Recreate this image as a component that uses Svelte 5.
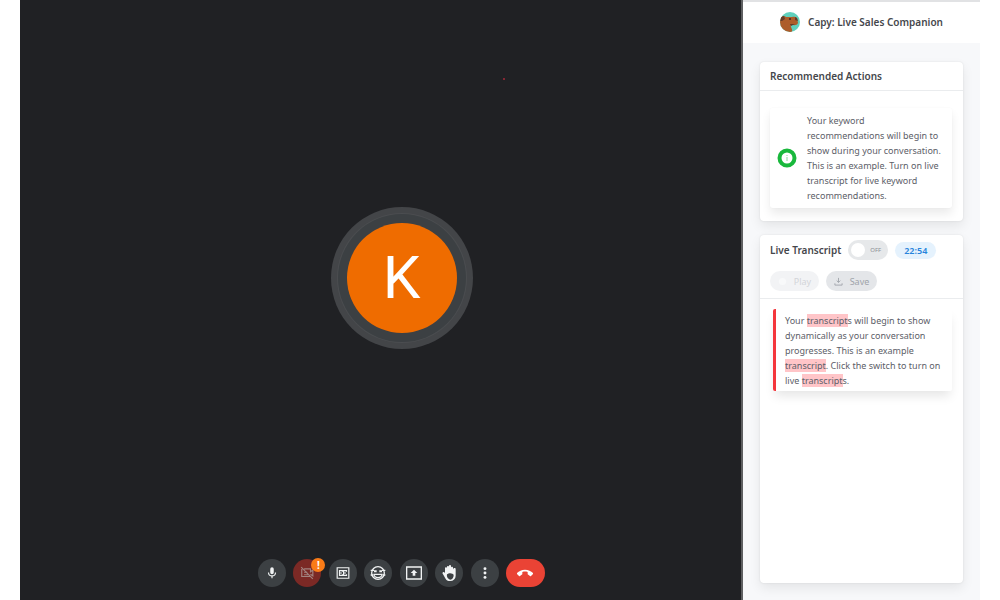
<script>
  let live = $state(false);
</script>

<div class="page">
  <main class="stage">
    <span class="dot"></span>
    <div class="tile">
      <div class="ring"><div class="halo"><div class="avatar">K</div></div></div>
    </div>
    <div class="bar">
      <div class="controls">
        <button class="round" aria-label="Microphone">
          <svg viewBox="0 0 24 24"><path d="M12 14a3 3 0 0 0 3-3V5a3 3 0 0 0-6 0v6a3 3 0 0 0 3 3zm5-3a5 5 0 0 1-10 0H5a7 7 0 0 0 6 6.9V21h2v-3.1a7 7 0 0 0 6-6.9z" /></svg>
        </button>
        <button class="round camera" aria-label="Camera off">
          <svg viewBox="0 0 24 24" class="line"><path d="M7 5H18V10L22 7V17L18 14M18 18H3V5M2 2L22 22M7 15h7M8 12a2 2 0 0 1 4 0" /></svg>
          <span class="badge">!</span>
        </button>
        <button class="round" aria-label="Captions">
          <svg viewBox="0 0 24 24" class="line"><path d="M2 3H22V21H2ZM11 10V8H6V16H11V14M18 10V8H13V16H18V14M6 12h4M13 12h4" /></svg>
        </button>
        <button class="round" aria-label="Reactions">
          <svg viewBox="0 0 24 24" class="line face"><circle cx="12" cy="12" r="9.500" /><path d="M1 8h5M18 8h5M1 15h4M19 15h4" /><path class="fill" d="M6 8h4v3H6zM14 8h4v3h-4z" /><path d="M6 14h12a6 5 0 0 1-12 0z" /></svg>
        </button>
        <button class="round" aria-label="Present">
          <svg viewBox="0 0 24 24" class="line present"><path d="M1 3H23V21H1Z" /><path class="fill" d="M12 7l5 5h-3v4h-4v-4H7z" /></svg>
        </button>
        <button class="round" aria-label="Raise hand">
          <svg viewBox="0 0 24 24" class="hand"><path d="M22 6v10a8 8 0 0 1-8 8c-4 0-6-1-8-5L2 12l1-1c1-1 2 0 3 1V5c0-2 3-2 3 0V3c0-2 3-2 3 0V2c0-3 3-3 3 0v2c0-2 3-2 3 0v3c0-3 4-3 4-1z" /><path class="palm" d="M9 14c3-3 9-2 10 1 0 4-2 7-5 7s-6-4-5-8z" /></svg>
        </button>
        <button class="round" aria-label="More options">
          <svg viewBox="0 0 24 24"><circle cx="12" cy="4.500" r="2.500" /><circle cx="12" cy="12" r="2.500" /><circle cx="12" cy="19.500" r="2.500" /></svg>
        </button>
        <button class="round end" aria-label="Leave call">
          <svg viewBox="0 0 24 24"><path d="M12 7C7 7 3 9 0 12c-.5.500-.5 1 0 1.500l3 3c.5.500 1 .4 1.500 0L8 14v-3.500c3-1 5-1 8 0V14l3.500 2.500c.5.400 1 .5 1.500 0l3-3c.5-.5.500-1 0-1.500-3-3-7-5-12-5z" /></svg>
        </button>
      </div>
    </div>
  </main>

  <aside class="panel">
    <header class="brand">
      <svg class="logo" viewBox="0 0 20 20" aria-hidden="true">
        <defs><clipPath id="disc"><circle cx="10" cy="10" r="10" /></clipPath></defs>
        <g clip-path="url(#disc)">
          <rect width="20" height="20" fill="#5fd0bd" />
          <path d="M0 7C1 4 4 3 6 5L9 5C12 5 15 4 17 6L18 11C17 14 14 13 11 13C10 15 13 17 12 20H0Z" fill="#ad5d2a" />
          <path d="M1 5L4 4L5 7L2 9L0 9ZM15 5L17 6L18 9L15 8ZM10 12L15 12L11 14Z" fill="#633b2a" />
          <circle cx="10" cy="7" r="1" fill="#3c2920" />
        </g>
      </svg>
      <h1>Capy: Live Sales Companion</h1>
    </header>

    <div class="cards">
      <section class="card">
        <h2 class="head">Recommended Actions</h2>
        <div class="tip">
          <svg class="info" viewBox="0 0 20 20" aria-hidden="true"><circle cx="10" cy="10" r="7.500" /><path d="M10 7v1M10 9v4" /></svg>
          <p>Your keyword recommendations will begin to show during your conversation. This is an example. Turn on live transcript for live keyword recommendations.</p>
        </div>
      </section>

      <section class="card grow">
        <div class="head tools">
          <div class="row">
            <h2>Live Transcript</h2>
            <label class="switch">
              <input type="checkbox" role="switch" aria-label="Live Transcript" bind:checked={live} />
              <span class="knob"></span><span>{live ? 'ON' : 'OFF'}</span>
            </label>
            <span class="time">22:54</span>
          </div>
          <div class="row actions">
            <button class="pill play" disabled><svg viewBox="0 0 10 10"><circle cx="5" cy="5" r="4" /></svg>Play</button>
            <button class="pill" disabled><svg viewBox="0 0 10 10"><path d="M5 1V6M3 4L5 6L7 4M1 7V9H9V7" /></svg>Save</button>
          </div>
        </div>
        <p class="quote">Your <mark>transcript</mark>s will begin to show dynamically as your conversation progresses. This is an example <mark>transcript</mark>. Click the switch to turn on live <mark>transcript</mark>s.</p>
      </section>
    </div>
  </aside>
</div>

<style>
  :global(body) { margin: 0; background: #fff; }
  .page {
    display: flex;
    min-height: 100vh;
    padding: 0 20px;
    box-sizing: border-box;
    font-family: "Noto Sans", "Open Sans", sans-serif;
    font-size: 9px;
    line-height: 15px;
    color: #5c6068;
  }
  button { font: inherit; border: 0; padding: 0; }
  h1, h2, p { margin: 0; }
  h1, h2 { font-size: 10px; font-weight: 600; line-height: 16px; color: #45474c; }

  .stage {
    position: relative;
    flex: 1;
    display: flex;
    flex-direction: column;
    padding-left: 42px;
    background: #202124;
  }
  .dot {
    position: absolute;
    left: 67%;
    top: 13%;
    width: 2px;
    height: 2px;
    border-radius: 50%;
    background: #a52a38;
  }
  .tile { flex: 1; display: grid; place-items: center; }
  .ring, .halo, .avatar { display: grid; place-items: center; border-radius: 50%; }
  .ring { width: 142px; height: 142px; background: #434548; }
  .halo { width: 128px; height: 128px; background: #3c4043; box-shadow: 0 0 0 1px #4b4d50; }
  .avatar {
    width: 110px;
    height: 110px;
    background: #ef6c00;
    color: #fff;
    font-family: Roboto, sans-serif;
    font-size: 60px;
    line-height: 110px;
  }
  .bar { display: flex; justify-content: center; padding: 3px 0 13px; }
  .controls { display: flex; justify-content: space-between; width: 287px; }
  .round {
    position: relative;
    display: grid;
    place-items: center;
    width: 28px;
    height: 28px;
    border-radius: 14px;
    background: #3c4043;
    color: #f1f3f4;
  }
  .round svg { width: 14px; height: 14px; fill: currentColor; }
  .round .line { fill: none; stroke: currentColor; stroke-width: 2; }
  .round .present, .round .face, .round .hand { width: 16px; height: 16px; }
  .round .fill { fill: currentColor; stroke: none; }
  .palm { fill: #3c4043; }
  .camera { background: #7b2925; color: #a2837f; }
  .badge {
    position: absolute;
    top: -1px;
    right: -4px;
    width: 14px;
    height: 14px;
    border-radius: 50%;
    background: #fa7b17;
    color: #fff;
    font-size: 10px;
    font-weight: 700;
    line-height: 14px;
  }
  .round.end { width: 39px; background: #ea4335; color: #fff; }
  .end svg { width: 16px; height: 16px; }

  .panel {
    display: flex;
    flex-direction: column;
    flex: 0 0 237px;
    border-left: 2px solid #5e5f61;
    background: #f7f8fa;
  }
  .brand {
    display: flex;
    align-items: center;
    justify-content: center;
    gap: 8px;
    height: 39px;
    padding-bottom: 2px;
    border-top: 2px solid #e1e2e4;
    background: #fff;
  }
  .logo { width: 20px; height: 20px; }
  .cards { flex: 1; display: flex; flex-direction: column; gap: 14px; padding: 19px 17px 17px; }
  .card {
    border-radius: 4px;
    background: #fff;
    box-shadow: 0 0 2px #0000001a, 0 5px 12px #00000014;
  }
  .grow { flex: 1; }
  .head { padding: 6px 10px; border-bottom: 1px solid #eaecee; }
  .tip {
    display: flex;
    align-items: center;
    gap: 10px;
    margin: 17px 11px 13px 10px;
    padding: 5px 8px 5px 7px;
    border-radius: 3px;
    box-shadow: 0 0 2px #0000000a, 0 6px 10px #00000014;
  }
  .info { flex: none; width: 20px; height: 20px; fill: none; stroke: #19b83c; stroke-width: 4; }
  .info path { stroke: #8bd69b; stroke-width: 1; }
  .row { display: flex; align-items: center; gap: 7px; }
  .tools { display: grid; gap: 11px; padding: 5px 10px 7px; }
  .switch {
    position: relative;
    display: flex;
    align-items: center;
    justify-content: space-between;
    width: 30px;
    height: 20px;
    padding: 0 7px 0 3px;
    border-radius: 10px;
    background: #e6e8ea;
    color: #8b9096;
    font-size: 6px;
  }
  .switch input { position: absolute; inset: 0; width: 100%; height: 100%; margin: 0; opacity: 0; }
  .knob { width: 14px; height: 14px; border-radius: 50%; background: #fff; }
  .time {
    padding: 1px 9px;
    border-radius: 9px;
    background: #e5f2fd;
    color: #2684dc;
    font-weight: 600;
  }
  .pill {
    display: flex;
    align-items: center;
    justify-content: center;
    gap: 7px;
    width: 51px;
    height: 20px;
    border-radius: 10px;
    background: #e4e6e9;
    color: #9fa4aa;
  }
  .pill svg { width: 9px; height: 9px; fill: none; stroke: currentColor; }
  .play { width: 49px; background: #f2f3f5; color: #d2d5d9; }
  .play svg { fill: #f8f9fa; stroke: none; }
  .quote {
    margin: 10px 11px 0 13px;
    padding: 4px 8px 3px 9px;
    border-left: 3px solid #f4363c;
    border-radius: 2px;
    box-shadow: 0 7px 10px -2px #0000001a;
  }
  mark { background: #ffc5c8; color: inherit; }
</style>
